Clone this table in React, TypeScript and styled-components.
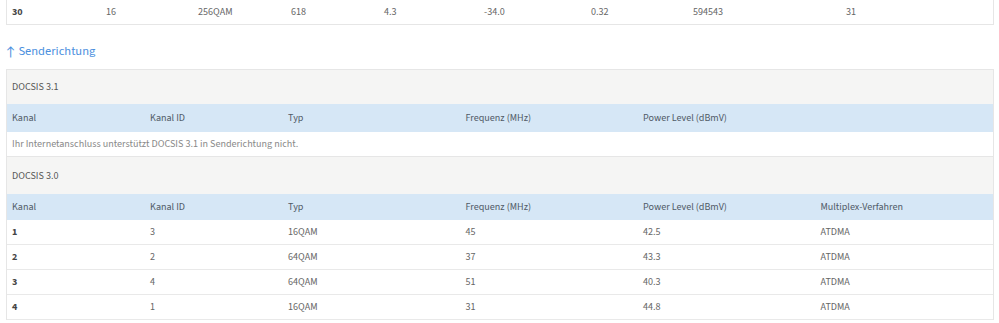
import React from "react";
import styled, { createGlobalStyle } from "styled-components";

const Global = createGlobalStyle`
  html, body { margin: 0; padding: 0; background: #fff; }
  body { font-family: "Source Sans 3", "Lato", sans-serif; font-size: 10.1px; color: #555; }
`;

const Page = styled.div`
  width: 988px;
  margin-left: 6px;
`;

const TopTable = styled.div`
  border-left: 1px solid #e6e6e6;
  border-right: 1px solid #e6e6e6;
  border-bottom: 1px solid #e6e6e6;
`;

const TopRow = styled.div`
  display: grid;
  grid-template-columns: 94px 92px 93px 93px 100px 107px 102px 153px 1fr;
  height: 24px;
  align-items: center;
  padding-left: 5px;
`;

const Heading = styled.h2`
  margin: 0;
  height: 44px;
  display: flex;
  align-items: center;
  padding-top: 8px;
  box-sizing: border-box;
  font-size: 12.5px;
  font-weight: 400;
  color: #4a8fde;
`;

const Arrow = styled.span`
  margin-right: 3px;
  font-family: "Lato", sans-serif;
  font-size: 12.5px;
`;

const Box = styled.div`
  border: 1px solid #e6e6e6;
  border-bottom: none;
`;

const Caption = styled.div<{ $h: number }>`
  height: ${(p) => p.$h}px;
  display: flex;
  align-items: center;
  padding-left: 5px;
  background: #f5f5f4;
  color: #555;
`;

const Row = styled.div<{ $head?: boolean; $h: number }>`
  display: grid;
  grid-template-columns: 14% 14% 18% 18% 18% 18%;
  height: ${(p) => p.$h}px;
  align-items: center;
  background: ${(p) => (p.$head ? "#d6e7f6" : "#fff")};
  color: ${(p) => (p.$head ? "#505a66" : "#666")};
  border-bottom: ${(p) => (p.$head ? "none" : "1px solid #e9e9e9")};
`;

const Message = styled.div`
  height: 24px;
  display: flex;
  align-items: center;
  padding-left: 5px;
  color: #888;
  border-bottom: 1px solid #e6e6e6;
`;

const Cell = styled.span<{ $bold?: boolean }>`
  padding-left: 5px;
  font-weight: ${(p) => (p.$bold ? 700 : 400)};
  color: ${(p) => (p.$bold ? "#444" : "inherit")};
`;

const TopCell = styled.span<{ $bold?: boolean }>`
  font-weight: ${(p) => (p.$bold ? 700 : 400)};
  color: ${(p) => (p.$bold ? "#444" : "#666")};
`;

const topData = ["30", "16", "256QAM", "618", "4.3", "-34.0", "0.32", "594543", "31"];

const heads = ["Kanal", "Kanal ID", "Typ", "Frequenz (MHz)", "Power Level (dBmV)", "Multiplex-Verfahren"];

const rows = [
  ["1", "3", "16QAM", "45", "42.5", "ATDMA"],
  ["2", "2", "64QAM", "37", "43.3", "ATDMA"],
  ["3", "4", "64QAM", "51", "40.3", "ATDMA"],
  ["4", "1", "16QAM", "31", "44.8", "ATDMA"],
];

export default function App() {
  return (
    <>
      <Global />
      <Page>
        <TopTable>
          <TopRow>
            {topData.map((v, i) => (
              <TopCell key={i} $bold={i === 0}>{v}</TopCell>
            ))}
          </TopRow>
        </TopTable>
        <Heading>
          <Arrow>↑</Arrow>Senderichtung
        </Heading>
        <Box>
          <Caption $h={34}>DOCSIS 3.1</Caption>
          <Row $head $h={28}>
            {heads.slice(0, 5).map((h) => (
              <Cell key={h}>{h}</Cell>
            ))}
          </Row>
          <Message>Ihr Internetanschluss unterstützt DOCSIS 3.1 in Senderichtung nicht.</Message>
          <Caption $h={37}>DOCSIS 3.0</Caption>
          <Row $head $h={26}>
            {heads.map((h) => (
              <Cell key={h}>{h}</Cell>
            ))}
          </Row>
          {rows.map((r) => (
            <Row key={r[0]} $h={24}>
              {r.map((v, i) => (
                <Cell key={i} $bold={i === 0}>{v}</Cell>
              ))}
            </Row>
          ))}
        </Box>
      </Page>
    </>
  );
}
